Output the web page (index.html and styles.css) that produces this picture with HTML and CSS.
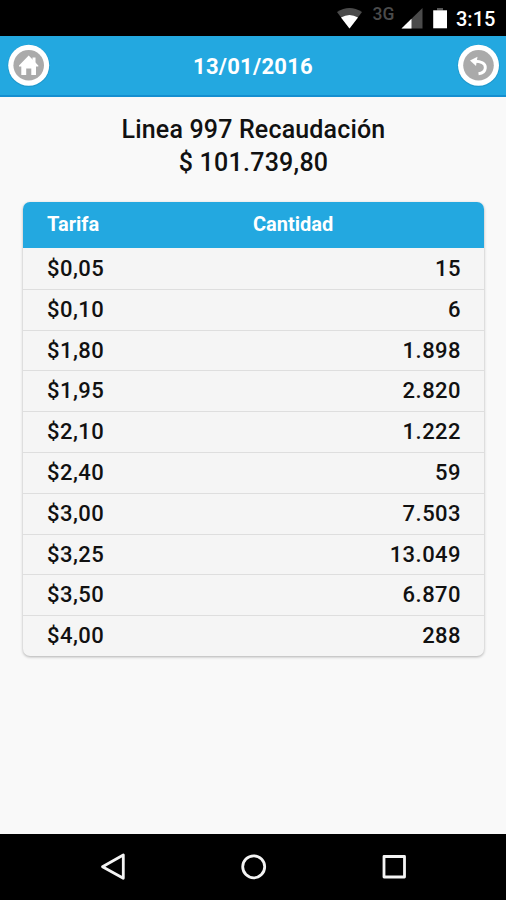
FILE: index.html
```html
<!DOCTYPE html>
<html lang="es">
<head>
<meta charset="utf-8">
<title>Recaudación</title>
<link rel="stylesheet" href="styles.css">
</head>
<body>
<div class="status">
  <svg class="signals" width="120" height="36" viewBox="336 0 120 36">
    <path d="M337 12Q349.500 4 362 12L349.500 28.500Z" fill="#4b4b4b"/>
    <path d="M341 17.500Q349.500 12.500 358 17.500L349.500 28.500Z" fill="#fff"/>
    <path d="M422.500 8V28.500H401.500Z" fill="#4b4b4b"/>
    <path d="M411.500 18.800V28.500H401.500Z" fill="#fff"/>
    <path d="M437 8h6v2.500h-6z" fill="#555"/>
    <path d="M433.200 10.300h13.800v18h-13.800z" fill="#fff"/>
    <text class="network" x="372.500" y="19.500">3G</text>
  </svg>
  <span class="clock">3:15</span>
</div>
<header class="bar">
  <button class="round" aria-label="Inicio"><svg width="44" height="44" viewBox="0 0 44 44">
    <circle cx="22.700" cy="22.800" r="21.200" fill="#1b87b5" opacity=".45"/>
    <circle cx="22.700" cy="22.300" r="20.500" fill="#fff"/><circle cx="22.700" cy="22.300" r="15.300" fill="#aaa"/>
    <path d="M22.700 12.500L32.300 22.500V23.500H30V32H25.300V25.500H20.200V32H15.300V23.500H13V22.500Z" fill="#fff"/><path d="M26.500 14.500h3v6L26.500 17z" fill="#fff"/>
  </svg></button>
  <h1 class="date">13/01/2016</h1>
  <button class="round" aria-label="Volver"><svg width="44" height="44" viewBox="0 0 44 44">
    <circle cx="22.500" cy="22.800" r="21.200" fill="#1b87b5" opacity=".45"/>
    <circle cx="22.500" cy="22.300" r="20.500" fill="#fff"/><circle cx="22.500" cy="22.300" r="15.300" fill="#aaa"/>
    <path d="M17.500 18.300C25 18 29.700 20.500 29.300 25C29 28.500 26.500 30.300 22.500 30.800" fill="none" stroke="#fff" stroke-width="2.900"/>
    <path d="M14 17.500L21.500 13.700L20 23Z" fill="#fff"/>
  </svg></button>
</header>
<main class="content">
  <h2 class="total">Linea 997 Recaudación<br><span class="amount">$ 101.739,80</span></h2>
  <section class="card">
    <div class="head"><span>Tarifa</span><span>Cantidad</span></div>
    <div class="row"><span>$0,05</span><span>15</span></div>
    <div class="row"><span>$0,10</span><span>6</span></div>
    <div class="row"><span>$1,80</span><span>1.898</span></div>
    <div class="row"><span>$1,95</span><span>2.820</span></div>
    <div class="row"><span>$2,10</span><span>1.222</span></div>
    <div class="row"><span>$2,40</span><span>59</span></div>
    <div class="row"><span>$3,00</span><span>7.503</span></div>
    <div class="row"><span>$3,25</span><span>13.049</span></div>
    <div class="row"><span>$3,50</span><span>6.870</span></div>
    <div class="row"><span>$4,00</span><span>288</span></div>
  </section>
</main>
<nav class="nav">
  <svg width="506" height="66" viewBox="0 834 506 66" fill="none" stroke="#f4f4f4" stroke-width="2.800" stroke-linejoin="round">
    <path d="M102.500 866.800L123.300 855V878.300Z"/>
    <circle cx="253.700" cy="866.800" r="11"/>
    <rect x="384" y="856.500" width="20.500" height="20.500"/>
  </svg>
</nav>
</body>
</html>
```
FILE: styles.css
```css
* { box-sizing: border-box; }
body {
  margin: 0;
  height: 900px;
  display: flex;
  flex-direction: column;
  overflow: hidden;
  background: #f9f9f9;
  color: #111;
  font-family: Roboto, sans-serif;
}
.status {
  height: 36px;
  flex: none;
  display: flex;
  justify-content: flex-end;
  align-items: center;
  padding-right: 10.5px;
  background: #000;
  color: #fff;
}
.signals { display: block; flex: none; }
.network { font: 500 17.5px Roboto, sans-serif; fill: #4b4b4b; }
.clock { width: 39.5px; font-size: 20px; font-weight: 500; line-height: 36px; padding-top: 2px; white-space: nowrap; }
.bar {
  height: 61px;
  flex: none;
  display: flex;
  align-items: flex-start;
  justify-content: space-between;
  padding: 7px 6px 0;
  background: #23a8e0;
  border-bottom: 2px solid #158fd0;
}
.round { width: 44px; height: 44px; padding: 0; border: 0; background: none; }
.round svg { display: block; }
.date { margin: 0; color: #fff; font-size: 22px; font-weight: 700; line-height: 48px; letter-spacing: .25px; }
.content { flex: 1; padding: 17px 22px 0 23px; }
.total { margin: 0 0 23px; text-align: center; font-size: 25px; font-weight: 500; line-height: 32.5px; letter-spacing: .17px; }
.amount { letter-spacing: .25px; }
.card {
  border-radius: 7px;
  overflow: hidden;
  background: #f5f5f5;
  box-shadow: 0 1px 3px rgba(0, 0, 0, .3);
}
.head {
  height: 46px;
  display: grid;
  grid-template-columns: 206px 1fr;
  padding: 0 24px;
  background: #23a8e0;
  color: #fff;
  font-size: 20px;
  font-weight: 700;
  line-height: 45px;
}
.row {
  height: 40.8px;
  display: flex;
  justify-content: space-between;
  padding: 0 23px 0 24px;
  border-bottom: 1px solid #dedede;
  font-size: 22px;
  font-weight: 500;
  line-height: 39px;
  letter-spacing: .45px;
}
.row:nth-child(2) { height: 41.8px; line-height: 41px; }
.row:last-child { height: 40px; border-bottom: 0; line-height: 40px; }
.nav { flex: none; height: 66px; background: #000; }
.nav svg { display: block; }
```
